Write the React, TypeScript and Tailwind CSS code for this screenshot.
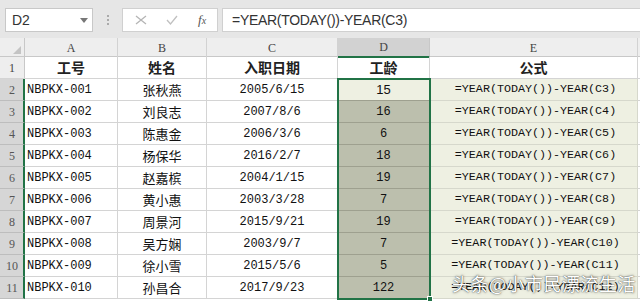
import React from 'react'

interface Row {
  id: string
  name: string
  date: string
  age: string
  cell: string
}

const rows: Row[] = [
  { id: 'NBPKX-001', name: '张秋燕', date: '2005/6/15', age: '15', cell: 'C3' },
  { id: 'NBPKX-002', name: '刘良志', date: '2007/8/6', age: '16', cell: 'C4' },
  { id: 'NBPKX-003', name: '陈惠金', date: '2006/3/6', age: '6', cell: 'C5' },
  { id: 'NBPKX-004', name: '杨保华', date: '2016/2/7', age: '18', cell: 'C6' },
  { id: 'NBPKX-005', name: '赵嘉槟', date: '2004/1/15', age: '19', cell: 'C7' },
  { id: 'NBPKX-006', name: '黄小惠', date: '2003/3/28', age: '7', cell: 'C8' },
  { id: 'NBPKX-007', name: '周景河', date: '2015/9/21', age: '19', cell: 'C9' },
  { id: 'NBPKX-008', name: '吴方娴', date: '2003/9/7', age: '7', cell: 'C10' },
  { id: 'NBPKX-009', name: '徐小雪', date: '2015/5/6', age: '5', cell: 'C11' },
  { id: 'NBPKX-010', name: '孙昌合', date: '2017/9/23', age: '122', cell: 'C12' },
]

const cols = 'grid grid-cols-[25px_93px_89px_131px_92px_208px_1fr]'
const cjk = "font-['Noto_Sans_CJK_SC',sans-serif]"
const mono = "font-['Liberation_Mono',monospace]"
const serif = "font-['Liberation_Serif',serif]"

export default function App() {
  return (
    <div className="w-[640px] h-[302px] overflow-hidden bg-white text-[#222]">
      {/* Formula bar */}
      <div className="h-[38px] bg-[#e6e6e6] flex items-start pt-[8px]">
        <div className="ml-[5px] w-[88px] h-[24px] bg-white border border-[#c8c8c8] flex items-center justify-between pl-[6px] pr-[4px]">
          <span className="font-['Liberation_Sans',sans-serif] text-[14px] text-[#333]">D2</span>
          <svg width="8" height="5" viewBox="0 0 8 5">
            <path d="M0 0h8L4 5z" fill="#777" />
          </svg>
        </div>
        <div className="w-[29px] h-[24px] flex flex-col items-center justify-center gap-[2px]">
          <span className="w-[2px] h-[2px] bg-[#aaa]" />
          <span className="w-[2px] h-[2px] bg-[#aaa]" />
          <span className="w-[2px] h-[2px] bg-[#aaa]" />
        </div>
        <div className="w-[96px] h-[24px] bg-white border border-[#d0d0d0] flex items-center">
          <svg className="ml-[12px]" width="12" height="10" viewBox="0 0 12 10">
            <path d="M1 1l10 8M11 1L1 9" stroke="#b5b5b5" strokeWidth="1.3" />
          </svg>
          <svg className="ml-[19px]" width="12" height="10" viewBox="0 0 12 10">
            <path d="M1 5l3.5 4L11 1" stroke="#c0c0c0" strokeWidth="1.3" fill="none" />
          </svg>
          <span className="ml-[20px] font-['Liberation_Serif',serif] italic text-[13px] text-[#555]">
            f<span className="text-[10px]">x</span>
          </span>
        </div>
        <div className="ml-[4px] flex-1 h-[24px] bg-white border border-[#d0d0d0] border-r-0 flex items-center pl-[9px]">
          <span className="font-['Liberation_Sans',sans-serif] text-[14px] tracking-[-0.3px] text-[#333]">
            =YEAR(TODAY())-YEAR(C3)
          </span>
        </div>
      </div>

      <div className="relative">
        {/* Column headers */}
        <div className={`${cols} h-[19px] bg-[#eeeeee] border-b border-[#c8c8c8] text-[12px] text-[#444] ${serif}`}>
          <div className="border-r border-[#c8c8c8] flex items-end justify-end pr-[3px] pb-[3px]">
            <svg width="8" height="8" viewBox="0 0 8 8">
              <path d="M8 0V8H0z" fill="#c4c4c4" />
            </svg>
          </div>
          <div className="border-r border-[#d2d2d2] flex items-center justify-center">A</div>
          <div className="border-r border-[#d2d2d2] flex items-center justify-center">B</div>
          <div className="border-r border-[#d2d2d2] flex items-center justify-center">C</div>
          <div className="bg-[#d2d2d2] border-b-2 border-[#217346] border-r border-r-[#c8c8c8] flex items-center justify-center -mb-px">D</div>
          <div className="border-r border-[#d2d2d2] flex items-center justify-center">E</div>
          <div />
        </div>

        {/* Row 1 headers */}
        <div className={`${cols} h-[22px] border-b border-[#d4d4d4] text-[14px] font-bold ${cjk}`}>
          <div className={`bg-[#eeeeee] border-r border-[#c8c8c8] flex items-end justify-center pb-[1px] text-[12px] font-normal text-[#444] ${serif}`}>1</div>
          <div className="border-r border-[#d4d4d4] flex items-center justify-center">工号</div>
          <div className="border-r border-[#d4d4d4] flex items-center justify-center">姓名</div>
          <div className="border-r border-[#d4d4d4] flex items-center justify-center">入职日期</div>
          <div className="border-r border-[#d4d4d4] flex items-center justify-center">工龄</div>
          <div className="border-r border-[#d4d4d4] flex items-center justify-center">公式</div>
          <div />
        </div>

        {/* Data rows */}
        {rows.map((r, i) => (
          <div key={r.id} className={`${cols} h-[22px]`}>
            <div className={`bg-[#d6d6d6] border-r-2 border-[#217346] border-b border-b-[#bdbdbd] flex items-end justify-center pb-[1px] pl-[1px] text-[12px] text-[#555] ${serif}`}>
              {i + 2}
            </div>
            <div className={`border-r border-b border-[#d4d4d4] flex items-center pl-[2px] text-[12px] text-[#111] ${mono}`}>{r.id}</div>
            <div className={`border-r border-b border-[#d4d4d4] flex items-center justify-center text-[13px] text-[#111] ${cjk}`}>{r.name}</div>
            <div className={`border-r border-b border-[#d4d4d4] flex items-center justify-center text-[12px] text-[#111] ${mono}`}>{r.date}</div>
            <div
              className={`border-r border-b border-[#9ea08f] flex items-center justify-center text-[12px] text-[#111] ${
                i === 0 ? "bg-[#eef0e2] font-['Liberation_Sans',sans-serif] text-[13px]" : `bg-[#bcbfad] ${mono}`
              }`}
            >
              {r.age}
            </div>
            <div className={`bg-[#eef0e2] border-r border-b border-[#d6d8cc] flex items-center justify-center pl-[4px] text-[11.7px] text-[#111] ${mono}`}>
              =YEAR(TODAY())-YEAR({r.cell})
            </div>
            <div className="border-b border-[#d4d4d4]" />
          </div>
        ))}

        {/* Selection outline D2:D11 */}
        <div className="absolute left-[337px] top-[40px] w-[94px] h-[222px] border-2 border-[#217346] pointer-events-none" />
        <div className="absolute left-[427px] top-[258px] w-[6px] h-[6px] bg-[#217346] border border-white" />

        {/* Watermark */}
        <div
          className={`absolute left-[452px] top-[232px] text-[18px] text-white tracking-[0.5px] ${cjk}`}
          style={{ textShadow: '0 0 1px rgba(0,0,0,0.8), 0 0 3px rgba(0,0,0,0.5)' }}
        >
          头条@小市民漂流生活
        </div>
      </div>
    </div>
  )
}
